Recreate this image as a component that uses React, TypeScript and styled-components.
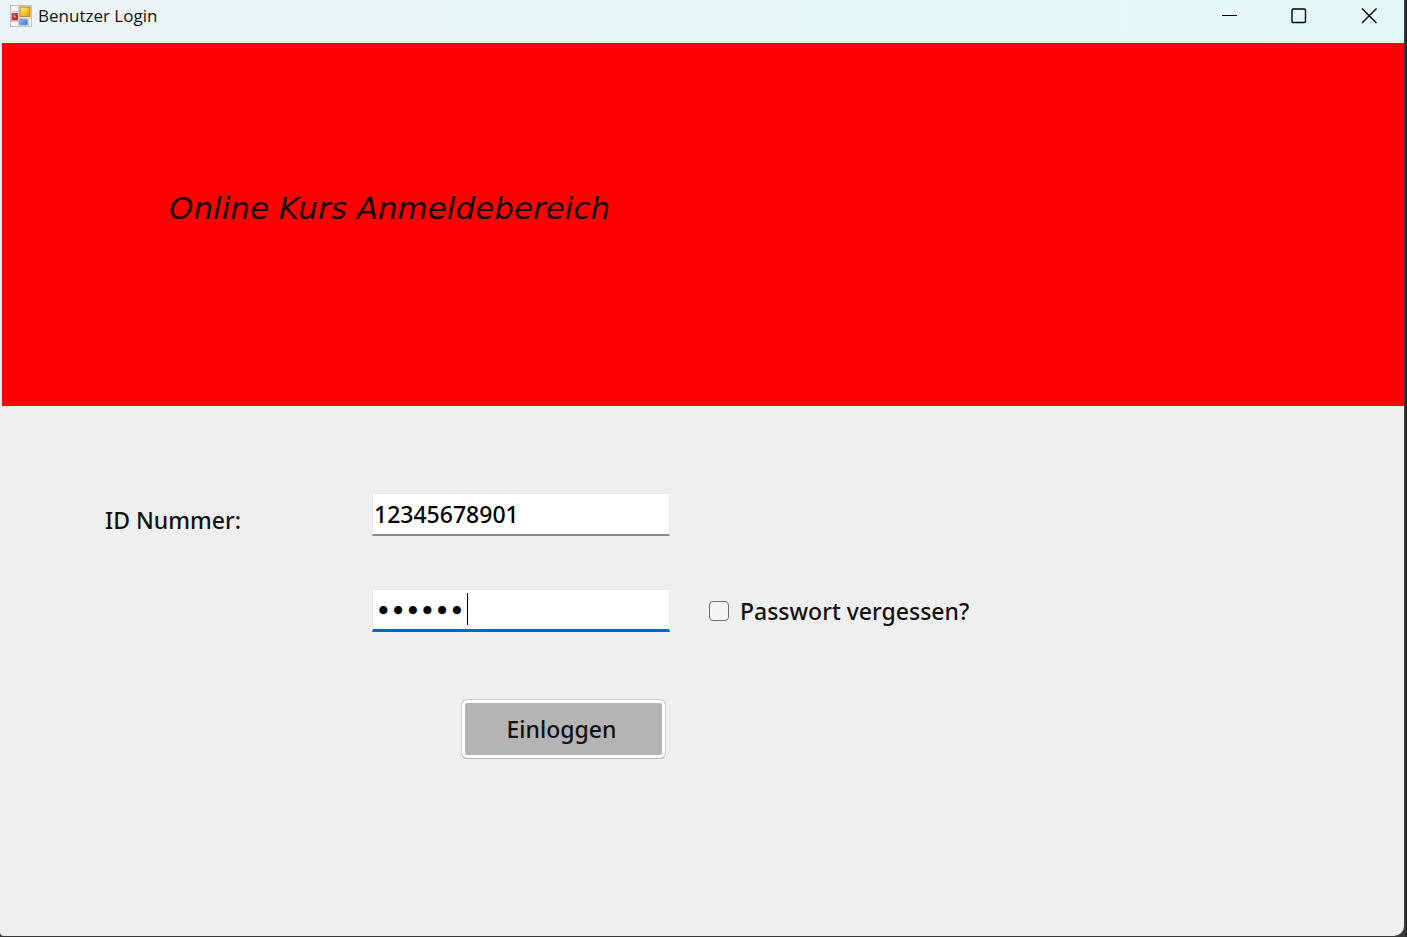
import React, { useState } from "react";
import styled, { createGlobalStyle } from "styled-components";

const GlobalStyle = createGlobalStyle`
  * { box-sizing: border-box; }
  body {
    margin: 0;
    background: #303032;
    color: #111;
    font-family: "Segoe UI", "Noto Sans", sans-serif;
  }
`;

const Backdrop = styled.div`
  min-height: 100vh;
  display: flex;
  padding: 0 3px 1px 0;
  background: linear-gradient(to right, #47474a, #1b1b1c) right / 3px 100% no-repeat #39373a;
`;

const Window = styled.main`
  flex: 1;
  min-width: 0;
  display: flex;
  flex-direction: column;
  background: #efefef;
  border-radius: 0 0 10px 4px;
  overflow: hidden;
`;

const TitleBar = styled.header`
  display: flex;
  justify-content: space-between;
  height: 39px;
  padding-left: 10px;
  background: linear-gradient(to right, #edf4f6, #e6f7f7 60%, #e5f8f8);
`;

const Caption = styled.div`
  display: flex;
  align-items: center;
  gap: 6px;
  height: 31px;
`;

const Title = styled.h1`
  margin: 0;
  font-size: 17px;
  font-weight: 400;
  line-height: 24px;
  font-family: "Segoe UI", "Open Sans", sans-serif;
`;

const WindowControls = styled.div`
  display: flex;
`;

const ControlButton = styled.button`
  display: flex;
  align-items: center;
  justify-content: center;
  width: 70px;
  height: 31px;
  padding: 0;
  border: 0;
  background: transparent;
`;

const Banner = styled.section`
  height: 363px;
  margin: 4px 0 0 2px;
  padding: 145px 167px 0;
  background: #ff0000;
`;

const BannerTitle = styled.h2`
  margin: 0;
  font-family: "Ink Free", "Segoe Script", "DejaVu Sans", sans-serif;
  font-size: 31px;
  font-style: italic;
  font-weight: 200;
  line-height: 40px;
  color: #100000;
`;

const LoginForm = styled.form`
  display: grid;
  grid-template-columns: 267px 298px auto;
  justify-content: start;
  row-gap: 53px;
  padding: 87px 105px;
  font-size: 23px;
  font-weight: 500;
  line-height: 32px;
`;

const Label = styled.label`
  align-self: end;
`;

const Field = styled.div`
  position: relative;
  grid-column: 2;
`;

const TextInput = styled.input<{ $active?: boolean }>`
  display: block;
  width: 100%;
  height: 43px;
  padding: 0 1px;
  border: 1px solid #e9eaeb;
  border-bottom: ${(p) => (p.$active ? "3px solid #0067c0" : "2px solid #8b8b8b")};
  outline: 0;
  background: #fff;
  color: #000;
  font: inherit;
`;

const PasswordInput = styled(TextInput)`
  padding: 2px 3px 0;
  font-family: "DejaVu Sans", sans-serif;
  font-size: 23px;
  font-weight: 700;
`;

const Caret = styled.span`
  position: absolute;
  top: 4px;
  left: 95px;
  width: 1px;
  height: 32px;
  background: #000;
`;

const CheckLabel = styled.label`
  display: flex;
  align-items: center;
  gap: 11px;
  padding-left: 39px;
`;

const CheckBox = styled.input`
  appearance: none;
  width: 20px;
  height: 20px;
  margin: 0;
  border: 1px solid #707070;
  border-radius: 4px;
  background: #f5f5f5;
  &:checked { background: #0067c0; }
`;

const SubmitButton = styled.button`
  grid-column: 2;
  justify-self: end;
  width: 205px;
  height: 60px;
  margin: 14px 4px 0 0;
  padding: 0 4px 0 0;
  border: 1px solid #d0d0d0;
  border-bottom-color: #b8b8b8;
  border-radius: 6px;
  background: #b4b4b4;
  box-shadow: inset 0 0 0 3px #fff;
  color: #111;
  font: inherit;
`;

const AppIcon = () => (
  <svg width="22" height="22" viewBox="0 0 22 22" aria-hidden="true">
    <defs>
      <linearGradient id="gold" x1="0" y1="0" x2="1" y2="1">
        <stop offset="0" stopColor="#ffe98a" />
        <stop offset="0.5" stopColor="#f7c531" />
        <stop offset="1" stopColor="#d99a14" />
      </linearGradient>
      <linearGradient id="red" x1="0" y1="0" x2="1" y2="1">
        <stop offset="0" stopColor="#e07a6c" />
        <stop offset="0.5" stopColor="#c92c22" />
        <stop offset="1" stopColor="#a01c18" />
      </linearGradient>
      <linearGradient id="blue" x1="0" y1="0" x2="1" y2="1">
        <stop offset="0" stopColor="#94bcff" />
        <stop offset="1" stopColor="#3a6cdc" />
      </linearGradient>
    </defs>
    <rect x="0.5" y="0.5" width="21" height="21" fill="#f4f5f6" stroke="#c2c5ca" />
    <path d="M1 6.500H9M8.500 1V21M1 16.500H9M18.500 14V21M9 13.500H21" stroke="#cfd1d6" />
    <rect x="10" y="2" width="10" height="9.500" fill="url(#gold)" stroke="#b98a28" strokeWidth="1.200" />
    <rect x="2" y="8.500" width="5.500" height="6.500" fill="url(#red)" stroke="#b0483e" />
    <rect x="4" y="10.500" width="1.500" height="2" fill="#f0b0a6" />
    <rect x="9.500" y="14.500" width="8" height="5.500" rx="0.500" fill="url(#blue)" stroke="#7a9ce0" />
  </svg>
);

export default function App() {
  const [id, setId] = useState("12345678901");
  const [password, setPassword] = useState("123456");

  return (
    <>
      <GlobalStyle />
      <Backdrop>
        <Window>
          <TitleBar>
            <Caption>
              <AppIcon />
              <Title>Benutzer Login</Title>
            </Caption>
            <WindowControls>
              <ControlButton aria-label="Minimieren">
                <svg width="16" height="16" viewBox="0 0 16 16" stroke="#000">
                  <path d="M1 7.500H16" />
                </svg>
              </ControlButton>
              <ControlButton aria-label="Maximieren">
                <svg width="16" height="16" viewBox="0 0 16 16" fill="none" stroke="#000" strokeWidth="1.400">
                  <rect x="1" y="1" width="13.500" height="13.500" rx="1.200" />
                </svg>
              </ControlButton>
              <ControlButton aria-label="Schließen">
                <svg width="16" height="16" viewBox="0 0 16 16" stroke="#000" strokeWidth="1.400">
                  <path d="M1 0.500L15.500 15M15.500 0.500L1 15" />
                </svg>
              </ControlButton>
            </WindowControls>
          </TitleBar>
          <Banner>
            <BannerTitle>Online Kurs Anmeldebereich</BannerTitle>
          </Banner>
          <LoginForm onSubmit={(e) => e.preventDefault()}>
            <Label htmlFor="id-number">ID Nummer:</Label>
            <Field>
              <TextInput id="id-number" value={id} onChange={(e) => setId(e.target.value)} />
            </Field>
            <Field>
              <PasswordInput
                $active
                type="password"
                aria-label="Passwort"
                value={password}
                onChange={(e) => setPassword(e.target.value)}
              />
              <Caret />
            </Field>
            <CheckLabel>
              <CheckBox type="checkbox" />
              Passwort vergessen?
            </CheckLabel>
            <SubmitButton type="submit">Einloggen</SubmitButton>
          </LoginForm>
        </Window>
      </Backdrop>
    </>
  );
}
